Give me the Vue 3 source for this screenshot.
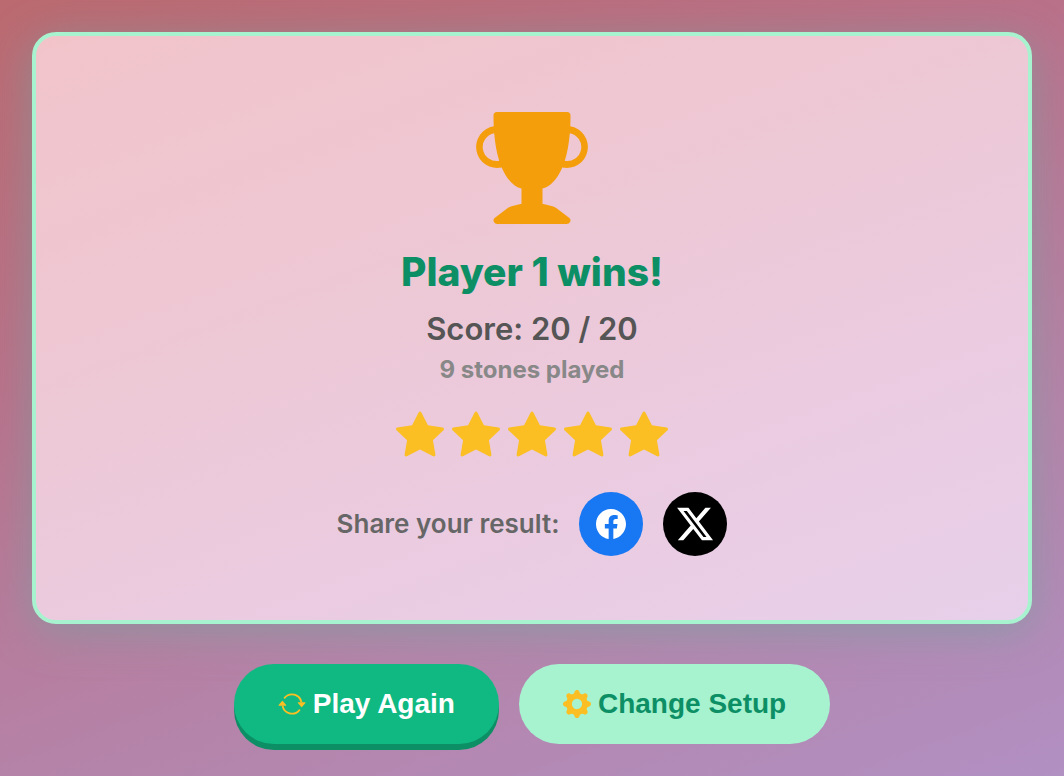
<script setup>
const stars = 5
const score = 20
const target = 20
const stones = 9
</script>

<template>
  <main class="page">
    <section class="card">
      <svg class="trophy" viewBox="0 0 16 16" aria-hidden="true">
        <path d="M2.5.5A.5.5 0 0 1 3 0h10a.5.5 0 0 1 .5.5q0 .807-.034 1.536a3 3 0 1 1-1.133 5.89c-.79 1.865-1.878 2.777-2.833 3.011v2.173l1.425.356c.194.048.377.135.537.255L13.3 15.1a.5.5 0 0 1-.3.9H3a.5.5 0 0 1-.3-.9l1.838-1.379c.16-.12.343-.207.537-.255L6.5 13.11v-2.173c-.955-.234-2.043-1.146-2.833-3.012a3 3 0 1 1-1.132-5.89A33 33 0 0 1 2.5.5m.099 2.54a2 2 0 0 0 .72 3.935c-.333-1.05-.588-2.346-.72-3.935m10.083 3.935a2 2 0 0 0 .72-3.935c-.133 1.59-.388 2.885-.72 3.935" />
      </svg>
      <h1 class="title">Player 1 wins!</h1>
      <p class="score">Score: {{ score }} / {{ target }}</p>
      <p class="stones">{{ stones }} stones played</p>
      <div class="stars" role="img" aria-label="5 stars">
        <svg v-for="n in stars" :key="n" class="star" viewBox="0 0 16 16" aria-hidden="true">
          <path d="M3.612 15.443c-.386.198-.824-.149-.746-.592l.83-4.73L.173 6.765c-.329-.314-.158-.888.283-.95l4.898-.696L7.538.792c.197-.39.73-.39.927 0l2.184 4.327 4.898.696c.441.062.612.636.282.95l-3.522 3.356.83 4.73c.078.443-.36.79-.746.592L8 13.187l-4.389 2.256z" />
        </svg>
      </div>
      <div class="share">
        <span class="share-label">Share your result:</span>
        <a class="social facebook" href="#" aria-label="Share on Facebook">
          <svg class="facebook-icon" viewBox="0 0 16 16" aria-hidden="true">
            <path d="M16 8.049c0-4.446-3.582-8.05-8-8.05C3.58 0-.002 3.603-.002 8.05c0 4.017 2.926 7.347 6.75 7.951v-5.625h-2.03V8.05H6.75V6.275c0-2.017 1.195-3.131 3.022-3.131.876 0 1.791.157 1.791.157v1.98h-1.009c-.993 0-1.303.621-1.303 1.258v1.51h2.218l-.354 2.326H9.25V16c3.824-.604 6.75-3.934 6.75-7.951" />
          </svg>
        </a>
        <a class="social x" href="#" aria-label="Share on X">
          <svg class="x-icon" viewBox="0 0 24 24" aria-hidden="true">
            <path d="M18.244 2.25h3.308l-7.227 8.26 8.502 11.24H16.17l-5.214-6.817L4.99 21.75H1.68l7.73-8.835L1.254 2.25H8.08l4.713 6.231zm-1.161 17.52h1.833L7.084 4.126H5.117z" />
          </svg>
        </a>
      </div>
    </section>
    <div class="actions">
      <button type="button" class="btn primary">
        <svg class="btn-icon" viewBox="0 0 16 16" aria-hidden="true">
          <path d="M11.534 7h3.932a.25.25 0 0 1 .192.41l-1.966 2.36a.25.25 0 0 1-.384 0l-1.966-2.36a.25.25 0 0 1 .192-.41m-11 2h3.932a.25.25 0 0 0 .192-.41L2.692 6.23a.25.25 0 0 0-.384 0L.342 8.59A.25.25 0 0 0 .534 9" />
          <path d="M8 3c-1.552 0-2.94.707-3.857 1.818a.5.5 0 1 1-.771-.636A6.002 6.002 0 0 1 13.917 7H12.9A5 5 0 0 0 8 3M3.1 9a5.002 5.002 0 0 0 8.757 2.182.5.5 0 1 1 .771.636A6.002 6.002 0 0 1 2.083 9z" />
        </svg>
        Play Again
      </button>
      <button type="button" class="btn secondary">
        <svg class="btn-icon" viewBox="0 0 16 16" aria-hidden="true">
          <path d="M9.405 1.05c-.413-1.4-2.397-1.4-2.81 0l-.1.34a1.464 1.464 0 0 1-2.105.872l-.31-.17c-1.283-.698-2.686.705-1.987 1.987l.169.311c.446.82.023 1.841-.872 2.105l-.34.1c-1.4.413-1.4 2.397 0 2.81l.34.1a1.464 1.464 0 0 1 .872 2.105l-.17.31c-.698 1.283.705 2.686 1.987 1.987l.311-.169a1.464 1.464 0 0 1 2.105.872l.1.34c.413 1.4 2.397 1.4 2.81 0l.1-.34a1.464 1.464 0 0 1 2.105-.872l.31.17c1.283.698 2.686-.705 1.987-1.987l-.169-.311a1.464 1.464 0 0 1 .872-2.105l.34-.1c1.4-.413 1.4-2.397 0-2.81l-.34-.1a1.464 1.464 0 0 1-.872-2.105l.17-.31c.698-1.283-.705-2.686-1.987-1.987l-.311.169a1.464 1.464 0 0 1-2.105-.872zM8 10.93a2.929 2.929 0 1 1 0-5.86 2.929 2.929 0 0 1 0 5.858z" />
        </svg>
        Change Setup
      </button>
    </div>
  </main>
</template>

<style>
body {
  margin: 0;
}
</style>

<style scoped>
.page {
  box-sizing: border-box;
  min-height: 100vh;
  padding: 32px 32px 26px;
  background: linear-gradient(160deg, #bb6a70 0%, #b97189 33%, #b583a8 67%, #b190c2 100%);
  font-family: Inter, "Liberation Sans", sans-serif;
}
.card {
  display: flex;
  flex-direction: column;
  align-items: center;
  padding: 76px 32px 64px;
  border: 4px solid #a7f3d0;
  border-radius: 24px;
  background: linear-gradient(160deg, #f2c4ca 0%, #edc8d5 40%, #ebcbe0 67%, #e7d0ea 100%);
  box-shadow: 0 8px 40px rgba(118, 160, 160, 0.6);
}
.trophy {
  width: 112px;
  height: 112px;
  fill: #f59e0b;
}
.title {
  margin: 24px 0 0;
  font-size: 39px;
  line-height: 48px;
  font-weight: 800;
  color: #0d8f66;
}
.score {
  margin: 12px 0 0;
  font-size: 31px;
  line-height: 42px;
  font-weight: 600;
  color: #555;
}
.stones {
  margin: 4px 0 0;
  font-size: 24px;
  line-height: 32px;
  font-weight: 700;
  color: #888;
}
.stars {
  display: flex;
  gap: 8px;
  margin-top: 24px;
}
.star {
  width: 48px;
  height: 48px;
  fill: #fbbf24;
}
.share {
  display: flex;
  align-items: center;
  flex-wrap: wrap;
  gap: 20px;
  margin-top: 34px;
}
.share-label {
  font-size: 26px;
  line-height: 32px;
  font-weight: 600;
  color: #666;
}
.social {
  display: flex;
  align-items: center;
  justify-content: center;
  width: 64px;
  height: 64px;
  border-radius: 50%;
  fill: #fff;
}
.facebook {
  background: #1877f2;
}
.x {
  background: #000;
}
.facebook-icon {
  width: 30px;
  height: 30px;
}
.x-icon {
  width: 40px;
  height: 40px;
}
.actions {
  display: flex;
  flex-wrap: wrap;
  justify-content: center;
  gap: 20px;
  margin-top: 40px;
}
.btn {
  display: flex;
  align-items: center;
  gap: 7px;
  padding: 24px 44px;
  border: 0;
  border-radius: 40px;
  font-family: "Liberation Sans", Arial, sans-serif;
  font-size: 28px;
  line-height: 32px;
  font-weight: 700;
  cursor: pointer;
}
.btn-icon {
  width: 28px;
  height: 28px;
  fill: #fbbf24;
}
.primary {
  background: #10b981;
  color: #fff;
  box-shadow: 0 6px 0 #0d8f66;
}
.secondary {
  background: #a7f3d0;
  color: #0d8f66;
}
</style>
